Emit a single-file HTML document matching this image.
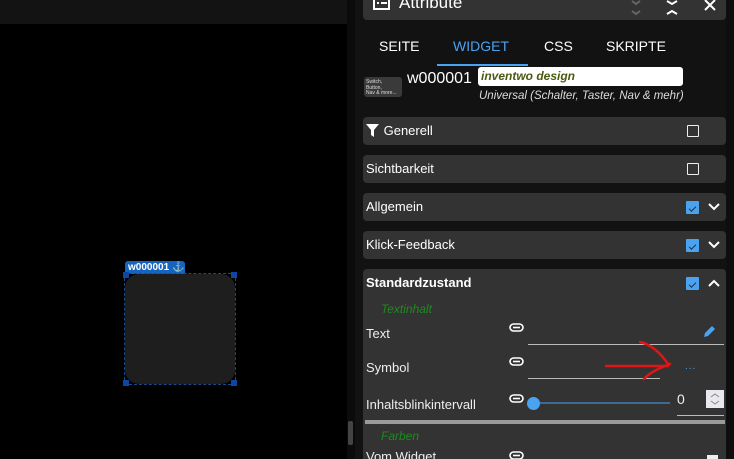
<!DOCTYPE html>
<html style="width:734px;height:459px;overflow:hidden"><head><meta charset="utf-8"><style>
*{margin:0;padding:0;box-sizing:border-box}
body{width:734px;height:459px;overflow:hidden;background:#000;font-family:"Liberation Sans",sans-serif;color:#fff;position:relative}
.abs{position:absolute}
.sec{position:absolute;left:363px;width:363px;height:28px;background:#333;border-radius:4px;font-size:13px;line-height:28px;padding-left:3px}
.cb{position:absolute;width:12px;height:12px;border:1.5px solid #eee;border-radius:1px;top:8px;left:324px}
.cbk{position:absolute;width:13px;height:13px;background:#4aa3f0;top:8px;left:323px;border-radius:1px}
.cbk:after{content:"";position:absolute;left:3px;top:5px;width:6px;height:3px;border-left:1.5px solid #234;border-bottom:1.5px solid #234;transform:rotate(-45deg)}
.chev{position:absolute;left:344px;top:7px}
.lbl{position:absolute;font-size:13px;color:#eee}
.grn{position:absolute;font-size:12px;color:#1f8a1f;font-style:italic}
.line{position:absolute;height:1px;background:#bbb}
</style></head><body>
<div class="abs" style="left:0;top:0;width:347px;height:24px;background:#131313"></div>
<div class="abs" style="left:347px;top:0;width:8px;height:459px;background:#0b0b0b"></div>
<div class="abs" style="left:348px;top:421px;width:5px;height:24px;background:#444;border-radius:2px"></div>
<div class="abs" style="left:355px;top:0;width:379px;height:459px;background:#121212"></div>
<div class="abs" style="left:726px;top:0;width:8px;height:459px;background:#0e0e0e"></div>

<div class="abs" style="left:125px;top:261px;width:60px;height:13px;background:#1565c0;border-radius:3px 3px 0 0;font-size:10px;font-weight:bold;line-height:13px;padding-left:3px">w000001 <span style="font-weight:normal">⚓</span></div>
<div class="abs" style="left:124px;top:273px;width:112px;height:112px;border:1px dashed #1a4a8a"></div>
<div class="abs" style="left:125px;top:274px;width:110px;height:110px;background:#1e1e1e;border-radius:14px"></div>
<div class="abs" style="left:123px;top:272px;width:6px;height:6px;background:#0d47a1"></div>
<div class="abs" style="left:231px;top:272px;width:6px;height:6px;background:#0d47a1"></div>
<div class="abs" style="left:123px;top:380px;width:6px;height:6px;background:#0d47a1"></div>
<div class="abs" style="left:231px;top:380px;width:6px;height:6px;background:#0d47a1"></div>

<div class="abs" style="left:363px;top:0;width:363px;height:20px;background:#333;border-radius:0 0 4px 4px"></div>
<svg class="abs" style="left:373px;top:0" width="20" height="12"><rect x="1" y="-4" width="15" height="13" fill="none" stroke="#fff" stroke-width="2"/><rect x="4" y="2" width="2" height="2" fill="#fff"/><rect x="8" y="2" width="6" height="2" fill="#fff"/></svg>
<div class="abs" style="left:399px;top:-7px;font-size:17px">Attribute</div>
<svg class="abs" style="left:628px;top:0" width="100" height="20" fill="none" stroke-width="2">
<path d="M4 1l4 3 4-3" stroke="#666"/><path d="M4 11l4 3 4-3" stroke="#666"/>
<path d="M39 1l5 3 5-3" stroke="#fff"/><path d="M39 14l5-3 5 3" stroke="#fff"/>
<path d="M77 0l10 10M87 0l-10 10" stroke="#fff"/></svg>

<div class="abs" style="left:379px;top:38px;font-size:14px">SEITE</div>
<div class="abs" style="left:453px;top:38px;font-size:14px;color:#4aa3f0">WIDGET</div>
<div class="abs" style="left:544px;top:38px;font-size:14px">CSS</div>
<div class="abs" style="left:606px;top:38px;font-size:14px">SKRIPTE</div>
<div class="abs" style="left:437px;top:64px;width:91px;height:2px;background:#4aa3f0"></div>

<div class="abs" style="left:364px;top:77px;width:38px;height:20px;background:#3a3a3a;border-radius:3px;font-size:5px;line-height:5.5px;padding:3px 2px;color:#ddd">Switch,<br>Button,<br>Nav &amp; more...</div>
<div class="abs" style="left:407px;top:70px;font-size:16px">w000001</div>
<div class="abs" style="left:478px;top:67px;width:205px;height:19px;background:#fff;border-radius:3px;font-size:12px;font-weight:bold;font-style:italic;color:#4a5a10;line-height:19px;padding-left:3px">inventwo design</div>
<div class="abs" style="left:479px;top:90px;font-size:11.5px;font-style:italic;color:#ddd">Universal (Schalter, Taster, Nav &amp; mehr)</div>

<div class="sec" style="top:117px"><svg style="vertical-align:-2px" width="14" height="13"><path d="M0 0h13l-5 6v7l-3-2V6z" fill="#fff"/></svg> Generell<div class="cb"></div></div>
<div class="sec" style="top:155px">Sichtbarkeit<div class="cb"></div></div>
<div class="sec" style="top:193px">Allgemein<div class="cbk"></div><svg class="chev" width="14" height="14"><path d="M2 4l5 5 5-5" stroke="#fff" stroke-width="2" fill="none"/></svg></div>
<div class="sec" style="top:231px">Klick-Feedback<div class="cbk"></div><svg class="chev" width="14" height="14"><path d="M2 4l5 5 5-5" stroke="#fff" stroke-width="2" fill="none"/></svg></div>
<div class="sec" style="top:269px;height:190px;border-radius:4px 4px 0 0;font-weight:bold">Standardzustand<div class="cbk"></div><svg class="chev" width="14" height="14"><path d="M2 10l5-5 5 5" stroke="#fff" stroke-width="2" fill="none"/></svg></div>

<div class="grn" style="left:381px;top:302px">Textinhalt</div>
<div class="lbl" style="left:366px;top:326px">Text</div>
<div class="lbl" style="left:366px;top:360px">Symbol</div>
<div class="lbl" style="left:366px;top:397px">Inhaltsblinkintervall</div>
<svg class="abs" style="left:509px;top:323px" width="16" height="10"><rect x="1" y="1" width="13" height="7" rx="3.5" fill="none" stroke="#fff" stroke-width="1.6"/><path d="M4 4.5h7" stroke="#fff" stroke-width="1.6"/></svg>
<svg class="abs" style="left:509px;top:357px" width="16" height="10"><rect x="1" y="1" width="13" height="7" rx="3.5" fill="none" stroke="#fff" stroke-width="1.6"/><path d="M4 4.5h7" stroke="#fff" stroke-width="1.6"/></svg>
<svg class="abs" style="left:509px;top:394px" width="16" height="10"><rect x="1" y="1" width="13" height="7" rx="3.5" fill="none" stroke="#fff" stroke-width="1.6"/><path d="M4 4.5h7" stroke="#fff" stroke-width="1.6"/></svg>
<svg class="abs" style="left:509px;top:451px" width="16" height="8"><rect x="1" y="1" width="13" height="7" rx="3.5" fill="none" stroke="#fff" stroke-width="1.6"/><path d="M4 4.5h7" stroke="#fff" stroke-width="1.6"/></svg>
<div class="line" style="left:528px;top:344px;width:196px"></div>
<svg class="abs" style="left:702px;top:325px" width="14" height="14"><path d="M2 12l1-4 7-7 3 3-7 7z" fill="#4aa3f0"/></svg>
<div class="line" style="left:528px;top:378px;width:132px"></div>
<div class="abs" style="left:685px;top:361px;font-size:10px;color:#4aa3f0;letter-spacing:1px">...</div>
<svg class="abs" style="left:600px;top:338px" width="80" height="45"><path d="M6 28h62M40 4c10 2 20 10 28 22M70 26c-10 4-20 8-26 15" stroke="#e01515" stroke-width="2.5" fill="none" stroke-linecap="round"/></svg>
<div class="abs" style="left:535px;top:402px;width:135px;height:2px;background:#3d6a94"></div>
<div class="abs" style="left:527px;top:397px;width:13px;height:13px;border-radius:50%;background:#4aa3f0"></div>
<div class="lbl" style="left:677px;top:391px;font-size:14px">0</div>
<div class="abs" style="left:706px;top:390px;width:18px;height:18px;background:#e8e8ee"></div>
<svg class="abs" style="left:706px;top:390px" width="18" height="18"><path d="M5 7l4-3 4 3M5 11l4 3 4-3" stroke="#888" fill="none"/></svg>
<div class="line" style="left:677px;top:415px;width:47px"></div>
<div class="abs" style="left:365px;top:420px;width:360px;height:4px;background:#9a9a9a"></div>
<div class="grn" style="left:381px;top:429px">Farben</div>
<div class="lbl" style="left:366px;top:449px">Vom Widget</div>
<div class="abs" style="left:707px;top:455px;width:11px;height:4px;background:#eee"></div>
</body></html>
